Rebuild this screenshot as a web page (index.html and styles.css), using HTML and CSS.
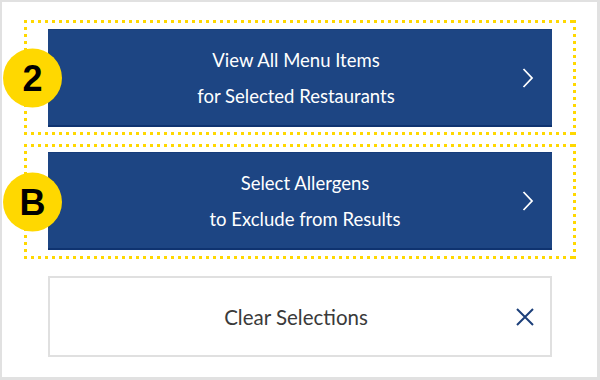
FILE: index.html
```html
<!DOCTYPE html>
<html lang="en">
<head>
<meta charset="utf-8">
<title>Menu filter</title>
<link rel="stylesheet" href="styles.css">
</head>
<body>
<div class="frame">
  <div class="step step-first">
    <span class="badge badge-num">2</span>
    <button class="nav-btn" type="button">
      <span class="nav-label">View All Menu Items<br>for Selected Restaurants</span>
      <svg class="chevron" width="12" height="20" viewBox="0 0 12 20" aria-hidden="true"><polyline points="1.5,1 10,10 1.5,19" fill="none" stroke="#fff" stroke-width="1.8"/></svg>
    </button>
  </div>
  <div class="step step-second">
    <span class="badge badge-letter">B</span>
    <button class="nav-btn nav-btn-shift" type="button">
      <span class="nav-label">Select Allergens<br>to Exclude from Results</span>
      <svg class="chevron" width="12" height="20" viewBox="0 0 12 20" aria-hidden="true"><polyline points="1.5,1 10,10 1.5,19" fill="none" stroke="#fff" stroke-width="1.8"/></svg>
    </button>
  </div>
  <button class="clear-btn" type="button">
    <span class="clear-label">Clear Selections</span>
    <svg class="close-icon" width="18" height="18" viewBox="0 0 18 18" aria-hidden="true"><path d="M1 1L17 17M17 1L1 17" stroke="#1c3f7a" stroke-width="2" fill="none"/></svg>
  </button>
</div>
</body>
</html>
```
FILE: styles.css
```css
* { box-sizing: border-box; }
html, body { margin: 0; padding: 0; background: #fff; }
.frame {
  width: 600px;
  height: 380px;
  border-style: solid;
  border-color: #e1e1e1;
  border-width: 2px 3px 3px 2px;
  background: #fff;
  padding: 18px 0 0 22px;
  display: flex;
  flex-direction: column;
  align-items: flex-start;
}
.step {
  position: relative;
  width: 552px;
  padding: 9px 23px 8px 24px;
  background:
    repeating-linear-gradient(90deg, #ffd800 0 3px, transparent 3px 7px) left top / 100% 3px no-repeat,
    repeating-linear-gradient(90deg, #ffd800 0 3px, transparent 3px 7px) left bottom / 100% 3px no-repeat,
    repeating-linear-gradient(180deg, #ffd800 0 3px, transparent 3px 7px) left top / 3px 100% no-repeat,
    repeating-linear-gradient(180deg, #ffd800 0 3px, transparent 3px 7px) right top / 3px 100% no-repeat;
}
.step-second {
  margin-top: 9px;
  padding-top: 8px;
  padding-bottom: 9px;
}
.badge {
  position: absolute;
  left: -21px;
  top: 50%;
  transform: translateY(-50%);
  width: 59px;
  height: 59px;
  border-radius: 50%;
  background: #ffd800;
  color: #000;
  font-family: "Liberation Sans", Arial, sans-serif;
  font-weight: 700;
  font-size: 36px;
  line-height: 59px;
  text-align: center;
  z-index: 2;
}
.nav-btn {
  position: relative;
  width: 504px;
  height: 98px;
  margin: 0;
  padding: 0 8px 0 0;
  border: 0;
  border-top: 1px solid #163c7a;
  border-bottom: 2px solid #0f3370;
  background: #1d4583;
  color: #fff;
  display: flex;
  align-items: center;
  justify-content: center;
  font-family: Lato, "Source Sans Pro", sans-serif;
  font-size: 18.5px;
  line-height: 36px;
  text-align: center;
  cursor: pointer;
}
.nav-btn-shift { padding: 0 0 0 10px; }
.nav-label { display: block; }
.chevron {
  position: absolute;
  right: 18px;
  top: 50%;
  transform: translateY(-50%);
}
.clear-btn {
  position: relative;
  margin: 17px 0 0 24px;
  width: 504px;
  height: 81px;
  border: 2px solid #e0e0e0;
  background: #fff;
  display: flex;
  align-items: center;
  justify-content: center;
  font-family: Lato, "Source Sans Pro", sans-serif;
  font-size: 20.5px;
  color: #3a3a3a;
  padding: 0 8px 0 0;
  cursor: pointer;
}
.close-icon {
  position: absolute;
  right: 16px;
  top: 50%;
  transform: translateY(-50%);
}
```
